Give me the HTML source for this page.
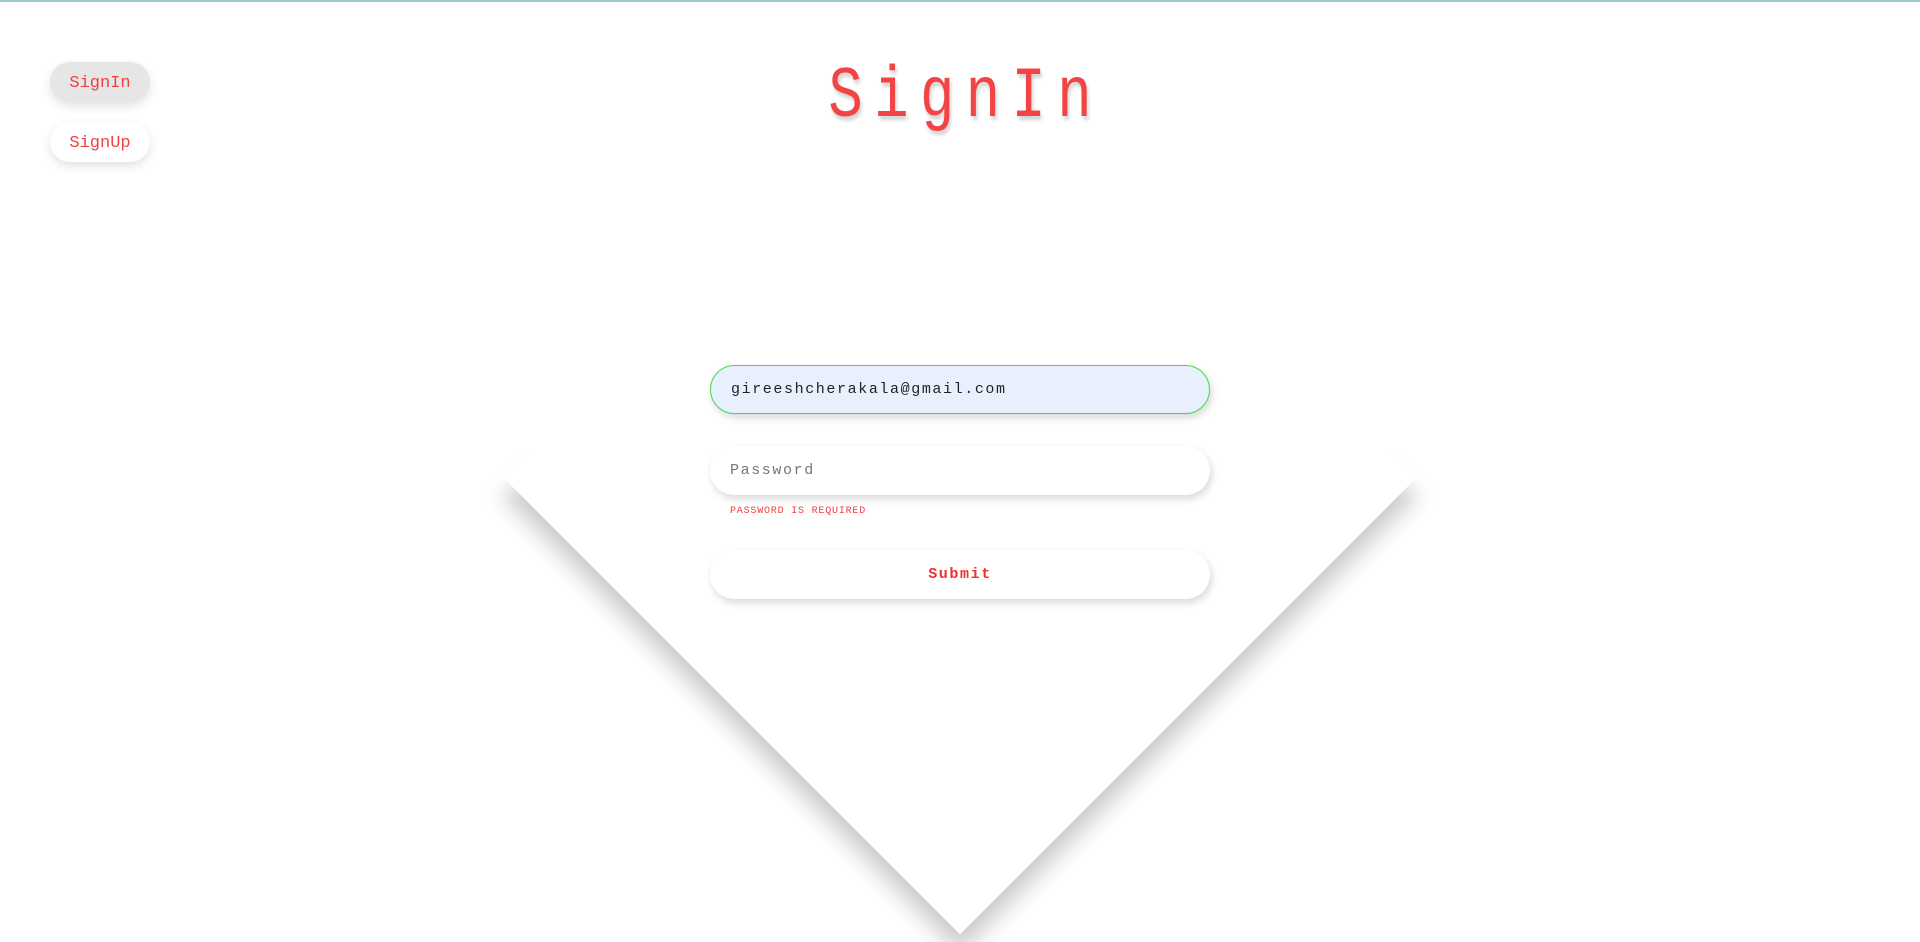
<!DOCTYPE html>
<html><head><meta charset="utf-8"><style>
html,body{margin:0;padding:0;width:1920px;height:942px;overflow:hidden;background:#fff;font-family:"Liberation Mono",monospace;}
.top{position:absolute;left:0;top:0;width:1920px;height:2px;background:#9cc9cc;}
.clip{position:absolute;left:0;top:440px;width:1920px;height:502px;overflow:hidden;-webkit-mask-image:linear-gradient(to bottom,transparent 0,#000 60px);mask-image:linear-gradient(to bottom,transparent 0,#000 60px);}
.diamond{position:absolute;width:648px;height:648px;left:636px;top:-288px;background:#fff;transform:rotate(45deg);box-shadow:14px 14px 22px rgba(0,0,0,.2);}
.nav{position:absolute;left:50px;width:100px;height:40px;border-radius:20px;color:#f04040;font-size:17px;text-align:center;line-height:43px;box-shadow:0 4px 10px rgba(0,0,0,.12);}
h1{position:absolute;left:0;width:1920px;top:52px;margin:0;text-align:center;font-weight:normal;font-size:72px;letter-spacing:14px;color:#f24444;text-shadow:2px 4px 4px rgba(0,0,0,.18);line-height:90px;transform:scaleX(0.8);transform-origin:960px 0;padding-left:14px;box-sizing:border-box;}
.inp{position:absolute;left:710px;width:500px;height:49px;border-radius:25px;box-sizing:border-box;font-size:15px;letter-spacing:1.6px;line-height:49px;padding-left:20px;box-shadow:2px 4px 8px rgba(0,0,0,.15);}
.err{position:absolute;left:730px;top:506px;font-size:10px;letter-spacing:.8px;color:#f04040;}
</style></head><body>
<div class="top"></div>
<div class="clip"><div class="diamond"></div></div>
<div class="nav" style="top:62px;background:#e6e6e6;">SignIn</div>
<div class="nav" style="top:122px;background:#fff;">SignUp</div>
<h1>SignIn</h1>
<div class="inp" style="top:365px;background:#e8f0fe;border:1px solid #3fdc4a;color:#222;line-height:47px;">gireeshcherakala@gmail.com</div>
<div class="inp" style="top:446px;background:#fff;color:#777;">Password</div>
<div class="err">PASSWORD IS REQUIRED</div>
<div class="inp" style="top:550px;background:#fff;color:#f03030;font-weight:bold;text-align:center;padding-left:0;">Submit</div>
</body></html>
